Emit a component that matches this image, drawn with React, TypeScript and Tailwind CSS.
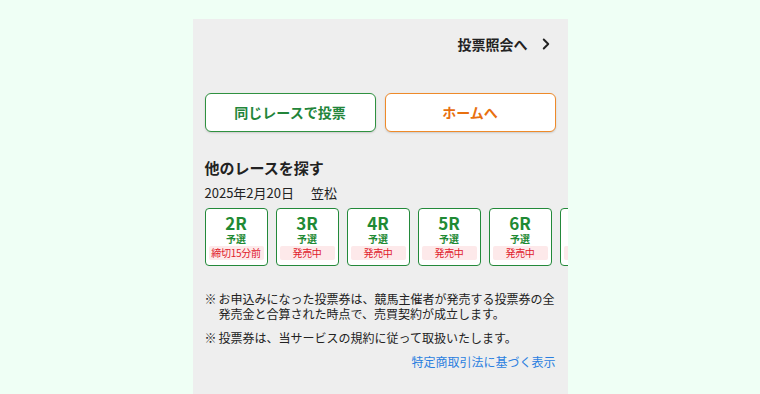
import { ChevronRight } from "lucide-react";

const races = [
  { no: "2R", name: "予選", status: "締切15分前" },
  { no: "3R", name: "予選", status: "発売中" },
  { no: "4R", name: "予選", status: "発売中" },
  { no: "5R", name: "予選", status: "発売中" },
  { no: "6R", name: "予選", status: "発売中" },
  { no: "7R", name: "予選", status: "発売中" },
];

export default function App() {
  return (
    <div
      className="min-h-screen bg-[#effff5] flex justify-center pt-[19px]"
      style={{ fontFamily: '"Noto Sans CJK JP", "Noto Sans", sans-serif' }}
    >
      <div className="w-[375px] min-h-[375px] bg-[#eeeeee] px-3 overflow-hidden text-[#222]">
        <div className="h-[50px] flex items-center justify-end">
          <span className="text-[14px] font-bold text-[#222]">投票照会へ</span>
          <ChevronRight size={18} strokeWidth={2.6} className="ml-[9px] mr-[1px] text-[#222]" />
        </div>

        <div className="mt-[24px] flex gap-[9px]">
          <button className="flex-1 h-[39px] rounded-[6px] border border-[#2f9140] bg-white text-[14px] font-bold text-[#22853a] shadow-[0_1px_2px_rgba(0,0,0,0.15)]">
            同じレースで投票
          </button>
          <button className="flex-1 h-[39px] rounded-[6px] border border-[#ee8a2a] bg-white text-[14px] font-bold text-[#e8700f] shadow-[0_1px_2px_rgba(0,0,0,0.15)]">
            ホームへ
          </button>
        </div>

        <h2 className="mt-[26px] text-[15px] leading-[20px] font-bold text-[#222]">他のレースを探す</h2>
        <div className="mt-[6px] text-[13px] leading-[18px] text-[#222] flex">
          <span>2025年2月20日</span>
          <span className="ml-[17px]">笠松</span>
        </div>

        <div className="mt-[6px] flex gap-[8px] -mr-3">
          {races.map((r) => (
            <div
              key={r.no}
              className="shrink-0 w-[63px] h-[58px] rounded-[4px] border border-[#23893a] bg-white flex flex-col items-center px-[3px]"
            >
              <div className="mt-[5px] text-[17px] leading-[18px] font-bold text-[#1f8a34]">{r.no}</div>
              <div className="text-[10px] leading-[13px] font-bold text-[#1f8a34]">{r.name}</div>
              <div className="mt-[1px] w-full h-[14px] rounded-[2px] bg-[#fde9ea] text-[10px] leading-[14px] text-center text-[#e0202a] tracking-[-0.3px]">
                {r.status}
              </div>
            </div>
          ))}
        </div>

        <div className="mt-[25px] text-[12px] leading-[15px] text-[#222]">
          <div className="flex">
            <span className="w-[14px] shrink-0">※</span>
            <span>お申込みになった投票券は、競馬主催者が発売する投票券の全発売金と合算された時点で、売買契約が成立します。</span>
          </div>
          <div className="flex mt-[9px]">
            <span className="w-[14px] shrink-0">※</span>
            <span>投票券は、当サービスの規約に従って取扱いたします。</span>
          </div>
          <div className="mt-[9px] text-right text-[#2b7fe0]">特定商取引法に基づく表示</div>
        </div>
      </div>
    </div>
  );
}
